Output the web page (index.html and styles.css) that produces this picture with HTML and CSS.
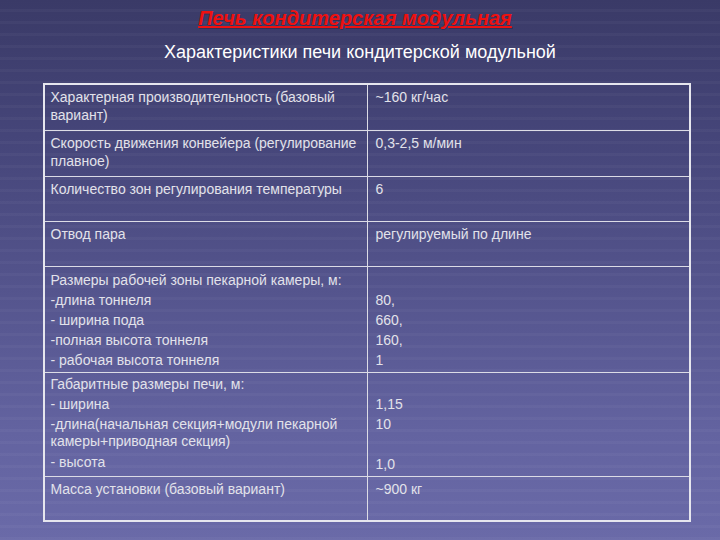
FILE: index.html
```html
<!DOCTYPE html>
<html lang="ru">
<head>
<meta charset="utf-8">
<link rel="stylesheet" href="styles.css">
</head>
<body>
<div class="slide">
  <h1 class="title">Печь кондитерская модульная</h1>
  <h2 class="subtitle">Характеристики печи кондитерской модульной</h2>
  <table class="spec">
    <tr class="r46">
      <td class="k"><p>Характерная производительность (базовый вариант)</p></td>
      <td class="v"><p>~160 кг/час</p></td>
    </tr>
    <tr class="r46">
      <td class="k"><p>Скорость движения конвейера (регулирование плавное)</p></td>
      <td class="v"><p>0,3-2,5 м/мин</p></td>
    </tr>
    <tr class="r45">
      <td class="k"><p>Количество зон регулирования температуры</p></td>
      <td class="v"><p>6</p></td>
    </tr>
    <tr class="r45">
      <td class="k"><p>Отвод пара</p></td>
      <td class="v"><p>регулируемый по длине</p></td>
    </tr>
    <tr class="r106 list">
      <td class="k">
        <p>Размеры рабочей зоны пекарной камеры, м:</p>
        <p>-длина тоннеля</p>
        <p>- ширина пода</p>
        <p>-полная высота тоннеля</p>
        <p>- рабочая высота тоннеля</p>
      </td>
      <td class="v">
        <p>&nbsp;</p>
        <p>80,</p>
        <p>660,</p>
        <p>160,</p>
        <p>1</p>
      </td>
    </tr>
    <tr class="r104 list">
      <td class="k">
        <p>Габаритные размеры печи, м:</p>
        <p>- ширина</p>
        <p class="wrap">-длина(начальная секция+модули пекарной камеры+приводная секция)</p>
        <p>- высота</p>
      </td>
      <td class="v">
        <p>&nbsp;</p>
        <p>1,15</p>
        <p class="gap">10</p>
        <p>1,0</p>
      </td>
    </tr>
    <tr class="r45 last">
      <td class="k"><p>Масса установки (базовый вариант)</p></td>
      <td class="v"><p>~900 кг</p></td>
    </tr>
  </table>
</div>
</body>
</html>
```

FILE: styles.css
```css
html, body {
  margin: 0;
  padding: 0;
}
body {
  width: 720px;
  height: 540px;
  overflow: hidden;
  font-family: "Liberation Sans", Arial, sans-serif;
  background:
    repeating-linear-gradient(180deg, rgba(255,255,255,0) 0px, rgba(255,255,255,0) 9px, rgba(255,255,255,0.03) 9px, rgba(255,255,255,0.03) 12px),
    linear-gradient(180deg, #3a3a67 0%, #454579 25%, #55558e 55%, #6363a0 80%, #6a6aa8 100%);
}
.slide {
  display: flex;
  flex-direction: column;
  align-items: center;
  padding-top: 7px;
}
.title {
  margin: 0;
  font-size: 20px;
  font-weight: bold;
  font-style: italic;
  text-decoration: underline;
  color: #ee1111;
  line-height: 22px;
  text-shadow: 1px 1px 0 rgba(40,20,40,0.35);
  padding-right: 10px;
}
.subtitle {
  margin: 12px 0 0 0;
  font-size: 18px;
  font-weight: normal;
  color: #ffffff;
  line-height: 22px;
}
.spec {
  margin-top: 20px;
  margin-left: 13px;
  width: 648px;
  border-collapse: collapse;
  border: 2px solid #e6e6ee;
  color: #e2e2ea;
  font-size: 14px;
}
.spec td {
  border: 1px solid #dcdce6;
  vertical-align: top;
  padding: 3px 6px 0 6px;
}
.spec td.k {
  width: 310px;
}
.spec td.v {
  padding-left: 8px;
}
.spec p {
  margin: 0;
  line-height: 18px;
}
.list p {
  line-height: 17px;
  margin-bottom: 3px;
}
.list p.wrap {
  margin-bottom: 4px;
}
.list td.v p.gap {
  margin-bottom: 23px;
}
.r46 { height: 46px; }
.r45 { height: 45px; }
.r106 { height: 106px; }
.r104 { height: 104px; }
.r106 td { padding-top: 5px; }
.r104 td { padding-top: 3px; }
```
